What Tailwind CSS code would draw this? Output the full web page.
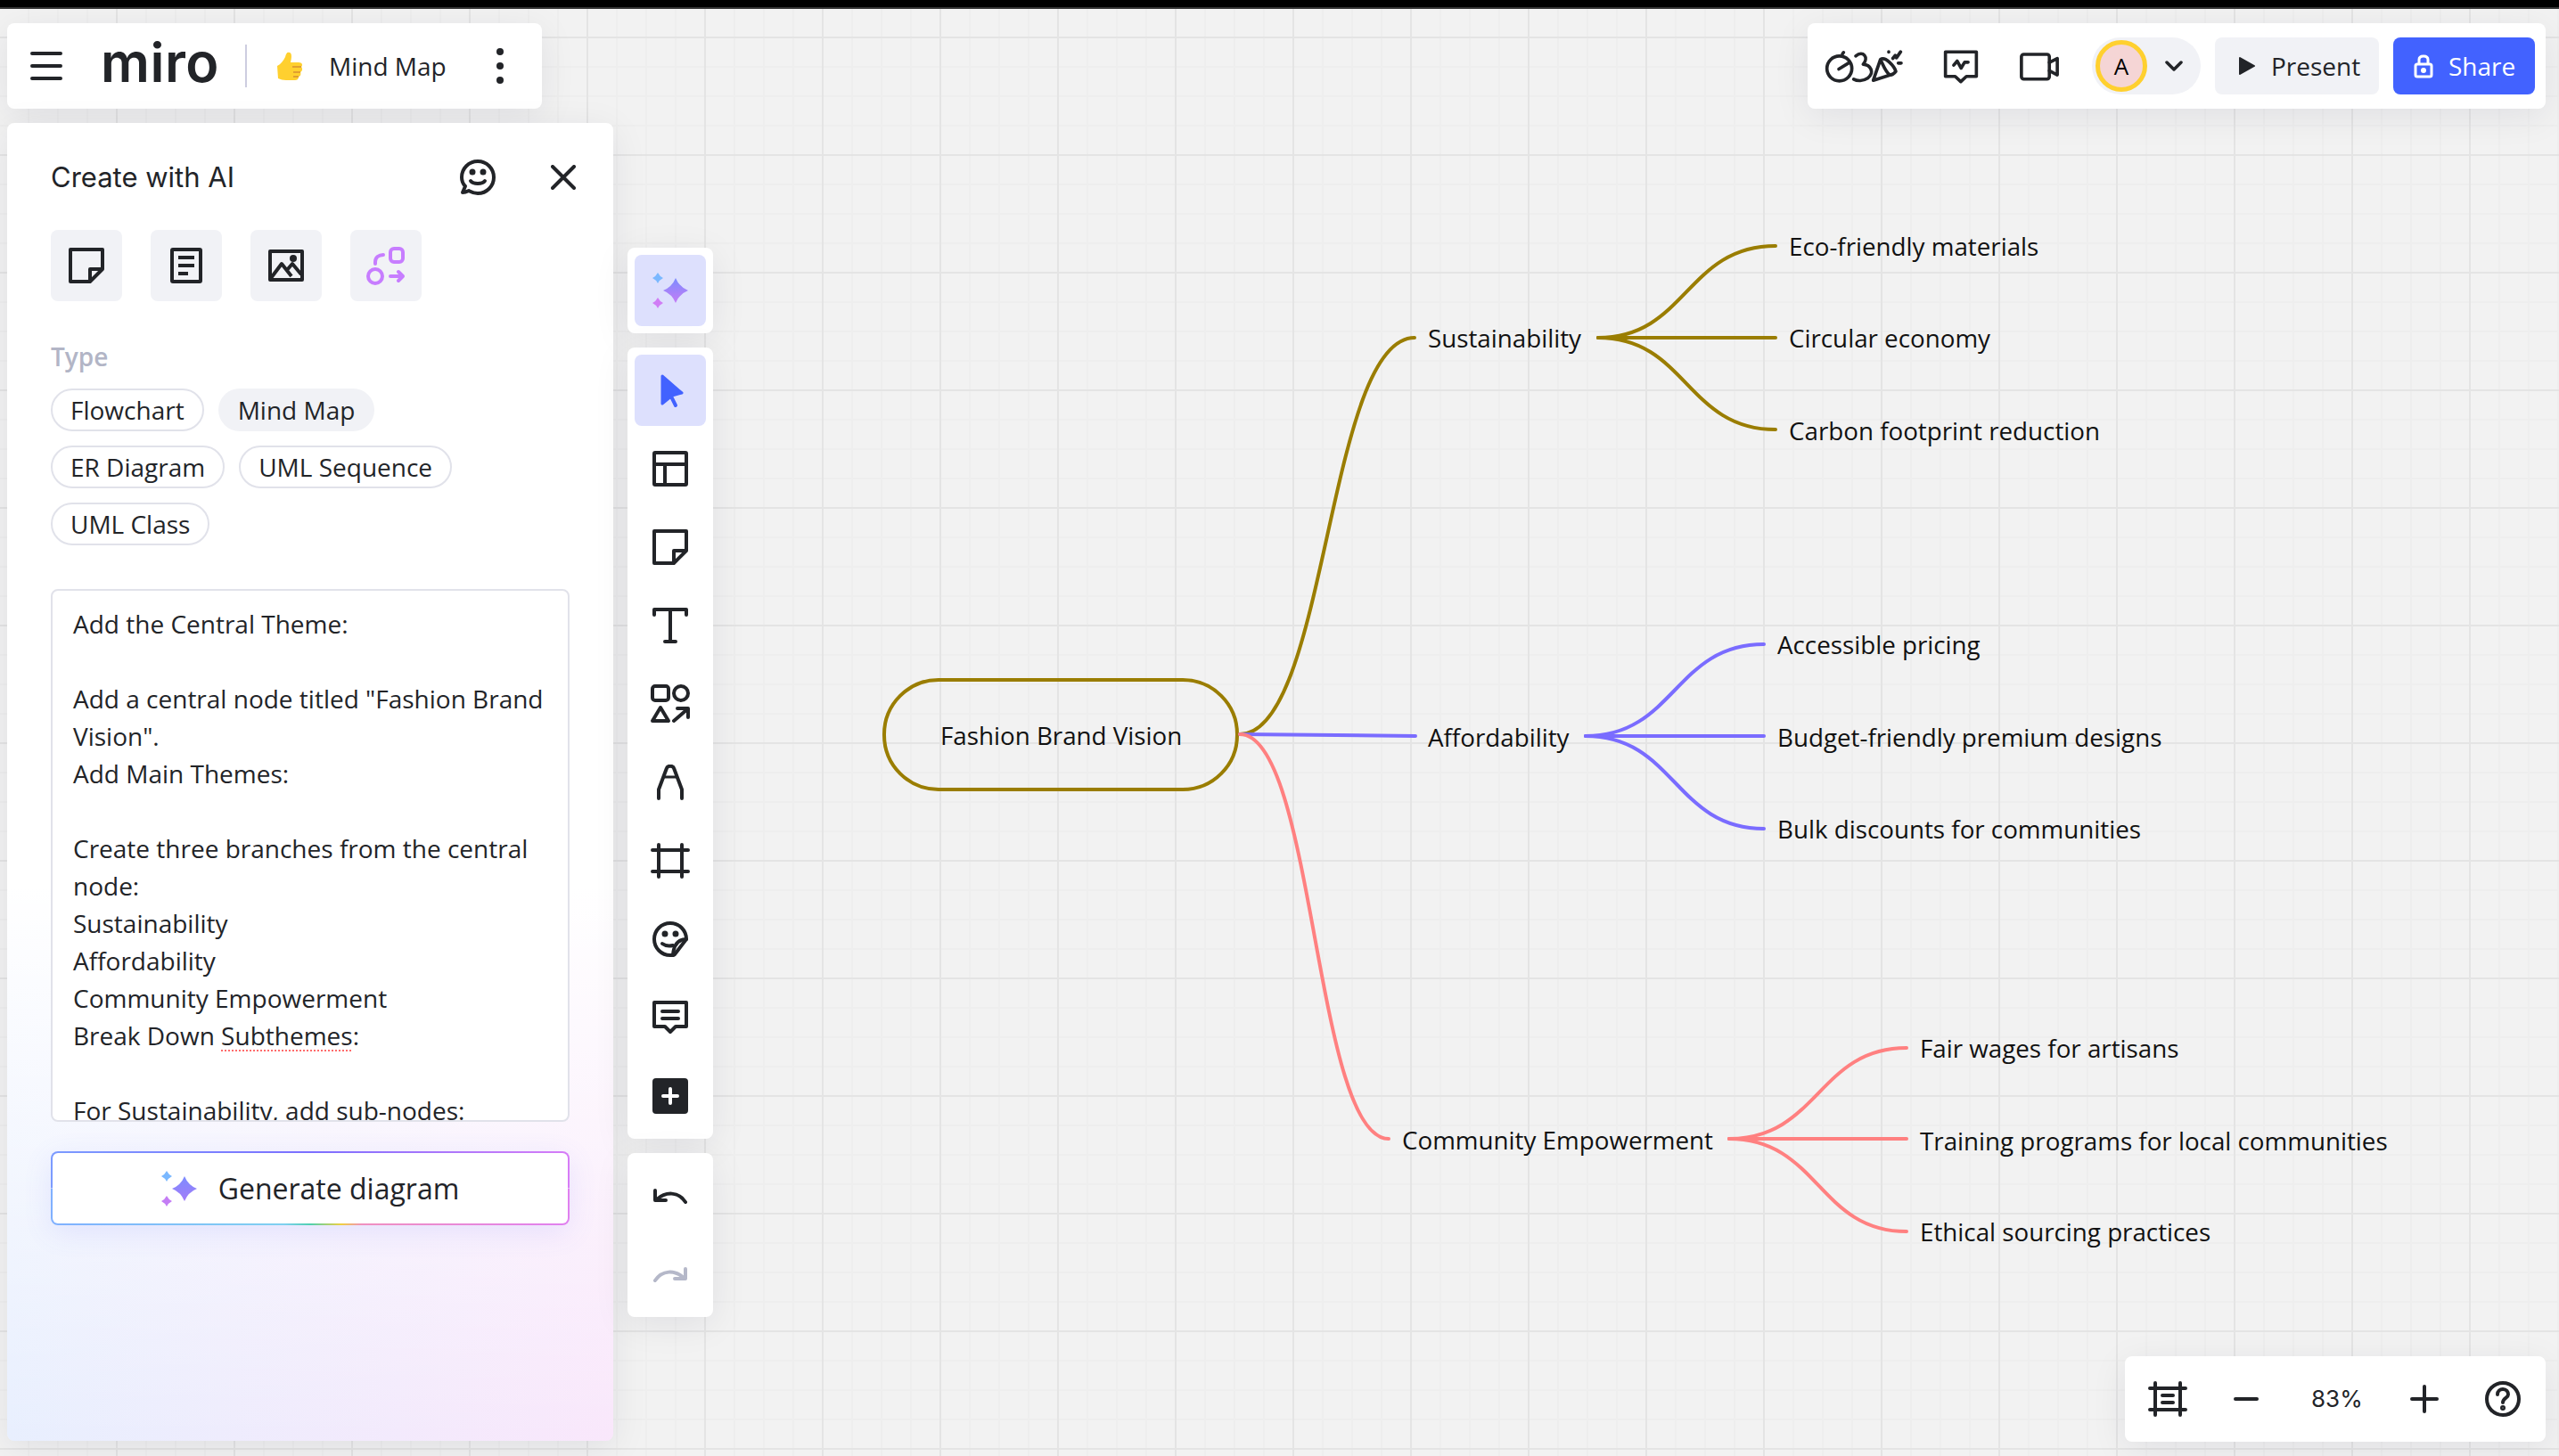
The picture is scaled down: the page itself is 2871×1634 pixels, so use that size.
<!DOCTYPE html>
<html lang="en">
<head>
  <meta charset="UTF-8" />
  <title>Miro - Mind Map</title>
  <script src="https://cdn.jsdelivr.net/npm/@tailwindcss/browser@4"></script>
</head>
<body class="bg-[#f2f2f2] font-['Open_Sans',sans-serif] text-[#222428]">
  <div class="relative w-[2871px] h-[1634px] overflow-hidden">

    <!-- top strip -->
    <div class="h-[10px] bg-black border-b-2 border-[#333333]"></div>

    <!-- canvas -->
    <div class="absolute inset-0 top-[10px] [background-image:linear-gradient(90deg,#e4e4e4_2px,transparent_2px),linear-gradient(#e4e4e4_2px,transparent_2px),linear-gradient(90deg,#eeeeee_2px,transparent_2px),linear-gradient(#eeeeee_2px,transparent_2px)] [background-size:132px_132px,132px_132px,33px_33px,33px_33px] [background-position:130px_31px,130px_31px,130px_31px,130px_31px]">
    </div>

    <!-- mind map lines -->
    <svg class="absolute left-0 top-0" width="2871" height="1634" fill="none" stroke-width="4" stroke-linecap="round">
      <rect x="992" y="763" width="396" height="123" rx="61" stroke="#9a7d00" />
      <g stroke="#9a7d00">
        <path d="M1391 824C1489 824 1489 379 1587 379" />
        <path d="M1793 379C1892 379 1892 276 1992 276" />
        <path d="M1793 379H1992" />
        <path d="M1793 379C1892 379 1892 482 1992 482" />
      </g>
      <g stroke="#7a6cff">
        <path d="M1391 824L1588 826" />
        <path d="M1779 826C1879 826 1879 723 1979 723" />
        <path d="M1779 826H1979" />
        <path d="M1779 826C1879 826 1879 930 1979 930" />
      </g>
      <g stroke="#ff8080">
        <path d="M1391 824C1475 824 1475 1278 1558 1278" />
        <path d="M1940 1278C2040 1278 2040 1176 2139 1176" />
        <path d="M1940 1278H2139" />
        <path d="M1940 1278C2040 1278 2040 1382 2139 1382" />
      </g>
    </svg>

    <!-- mind map nodes -->
    <div class="text-[27.75px] leading-[40px] text-[#111111] whitespace-nowrap">
      <div class="absolute left-[1055px] top-[825px] -translate-y-1/2">Fashion Brand Vision</div>
      <div class="absolute left-[1602px] top-[379px] -translate-y-1/2">Sustainability</div>
      <div class="absolute left-[1602px] top-[827px] -translate-y-1/2">Affordability</div>
      <div class="absolute left-[1573px] top-[1279px] -translate-y-1/2">Community Empowerment</div>
      <div class="absolute left-[2007px] top-[276px] -translate-y-1/2">Eco-friendly materials</div>
      <div class="absolute left-[2007px] top-[379px] -translate-y-1/2">Circular economy</div>
      <div class="absolute left-[2007px] top-[483px] -translate-y-1/2">Carbon footprint reduction</div>
      <div class="absolute left-[1994px] top-[723px] -translate-y-1/2">Accessible pricing</div>
      <div class="absolute left-[1994px] top-[827px] -translate-y-1/2">Budget-friendly premium designs</div>
      <div class="absolute left-[1994px] top-[930px] -translate-y-1/2">Bulk discounts for communities</div>
      <div class="absolute left-[2154px] top-[1176px] -translate-y-1/2">Fair wages for artisans</div>
      <div class="absolute left-[2154px] top-[1280px] -translate-y-1/2">Training programs for local communities</div>
      <div class="absolute left-[2154px] top-[1382px] -translate-y-1/2">Ethical sourcing practices</div>
    </div>

    <!-- top left bar -->
    <div class="absolute left-[8px] top-[26px] w-[600px] h-[96px] bg-white rounded-lg shadow-[0_8px_40px_rgba(5,0,56,0.08)] flex items-center pl-[26px]">
      <svg width="36" height="34" viewBox="0 0 36 34" fill="none" stroke="#222428" stroke-width="4" stroke-linecap="round"><path d="M2 3H34M2 17H34M2 31H34" /></svg>
      <div class="ml-[43px] w-[131px] font-['Inter',sans-serif] font-semibold text-[61px] leading-[60px] tracking-[0.5px] -mt-[8px]">miro</div>
      <div class="ml-[31px] w-[2px] h-[48px] bg-[#cdcde0]"></div>
      <svg class="ml-[32px]" width="32" height="33" viewBox="0 0 32 33">
        <path d="M2 16C6 14 9 10 11 6C12 2 13 0 16 1C19 2 18 8 17 12H26C30 12 31 15 29 17C31 19 30 22 28 23C29 25 28 28 26 28C26 31 24 32 22 32H12C8 32 6 31 3 30Z" fill="#ffd02f" />
        <path d="M19 17H29M20 23H28M20 28H26" stroke="#e0a030" stroke-width="2" fill="none" />
      </svg>
      <div class="ml-[28px] text-[28px] leading-[40px] whitespace-nowrap">Mind Map</div>
      <svg class="ml-[56px]" width="8" height="40" viewBox="0 0 8 40" fill="#222428"><circle cx="4" cy="4" r="4" /><circle cx="4" cy="20" r="4" /><circle cx="4" cy="36" r="4" /></svg>
    </div>

    <!-- create with AI panel -->
    <div class="absolute left-[8px] top-[138px] w-[680px] h-[1479px] rounded-lg px-[49px] pt-[40px] flex flex-col shadow-[0_8px_40px_rgba(5,0,56,0.08)] [background-image:linear-gradient(180deg,#ffffff_58%,rgba(255,255,255,0)_100%),linear-gradient(90deg,#e8effe,#f9e7fb)]">
      <div class="h-[42px] flex items-center">
        <div class="font-['Inter',sans-serif] text-[31px] leading-[42px] whitespace-nowrap">Create with AI</div>
        <svg class="ml-auto" width="40" height="40" viewBox="0 0 40 40" fill="none" stroke="#222428" stroke-width="4" stroke-linecap="round" stroke-linejoin="round">
          <path d="M3 37L6 30C3 27 2 23 2 20C2 10 10 2 20 2C30 2 38 10 38 20C38 30 30 38 20 38C15 38 12 36 10 35C8 36 6 37 3 37Z" />
          <path d="M12 24C15 28 25 28 28 24" />
          <circle cx="14" cy="14" r="1.5" fill="#222428" />
          <circle cx="26" cy="14" r="1.5" fill="#222428" />
        </svg>
        <svg class="ml-[62px] -mr-[7px]" width="28" height="28" viewBox="0 0 28 28" fill="none" stroke="#222428" stroke-width="4" stroke-linecap="round"><path d="M2 2L26 26M26 2L2 26" /></svg>
      </div>

      <div class="mt-[38px] flex gap-8">
        <div class="w-[80px] h-[80px] rounded-lg bg-[#f1f2f6] flex items-center justify-center">
          <svg width="40" height="40" viewBox="0 0 40 40" fill="none" stroke="#222428" stroke-width="4" stroke-linejoin="round"><path d="M2 2H38V24L24 38H2Z" /><path d="M24 38V24H38" /></svg>
        </div>
        <div class="w-[80px] h-[80px] rounded-lg bg-[#f1f2f6] flex items-center justify-center">
          <svg width="36" height="40" viewBox="0 0 36 40" fill="none" stroke="#222428" stroke-width="4" stroke-linejoin="round"><rect x="2" y="2" width="32" height="36" rx="1" /><path d="M9 11H27M9 20H27M9 29H20" /></svg>
        </div>
        <div class="w-[80px] h-[80px] rounded-lg bg-[#f1f2f6] flex items-center justify-center">
          <svg width="40" height="36" viewBox="0 0 40 36" fill="none" stroke="#222428" stroke-width="4" stroke-linejoin="round"><rect x="2" y="2" width="36" height="32" /><path d="M3 32L15 16L26 30M21 23L27 16L37 28" /><circle cx="28" cy="10" r="4" fill="#222428" stroke="none" /></svg>
        </div>
        <div class="w-[80px] h-[80px] rounded-lg bg-[#f1f2f6] flex items-center justify-center">
          <svg width="44" height="44" viewBox="0 0 44 44" fill="none" stroke="#c77dff" stroke-width="4" stroke-linecap="round" stroke-linejoin="round"><rect x="27" y="3" width="14" height="15" rx="4" /><path d="M10 20V18C10 13 14 10 19 10" /><circle cx="10" cy="34" r="8" /><path d="M27 34H41M36 29L41 34L36 39" /></svg>
        </div>
      </div>

      <div class="mt-[42px] h-[40px] text-[28px] leading-[40px] font-semibold text-[#b2b5c6]">Type</div>

      <div class="mt-[16px] flex flex-wrap gap-4 w-[500px] text-[28px] leading-[44px] whitespace-nowrap">
        <div class="h-[48px] px-[20px] rounded-full border-2 border-[#e1e2ea]">Flowchart</div>
        <div class="h-[48px] px-[22px] py-[2px] rounded-full bg-[#f1f2f6]">Mind Map</div>
        <div class="h-[48px] px-[20px] rounded-full border-2 border-[#e1e2ea]">ER Diagram</div>
        <div class="h-[48px] px-[20px] rounded-full border-2 border-[#e1e2ea]">UML Sequence</div>
        <div class="h-[48px] px-[20px] rounded-full border-2 border-[#e1e2ea]">UML Class</div>
      </div>

      <div class="mt-[49px] h-[598px] bg-white rounded-lg border-2 border-[#e1e2ea] pl-[23px] pt-[16px] overflow-hidden text-[28px] leading-[42px] whitespace-nowrap">
        Add the Central Theme:<br /><br />
        Add a central node titled "Fashion Brand<br />
        Vision".<br />
        Add Main Themes:<br /><br />
        Create three branches from the central<br />
        node:<br />
        Sustainability<br />
        Affordability<br />
        Community Empowerment<br />
        Break Down <span class="underline decoration-dotted decoration-[#ff6b6b] decoration-2 underline-offset-[5px]">Subthemes</span>:<br /><br />
        For Sustainability, add sub-nodes:
      </div>

      <div class="mt-[33px] h-[83px] rounded-lg p-[2px] bg-no-repeat shadow-[0_8px_32px_rgba(100,110,255,0.12)] [background-image:linear-gradient(90deg,#7b9bff,#7b6fff_50%,#d77cf7),linear-gradient(90deg,#7fb0ff,#7fd0f0_45%,#4fd0b0_50%,#f0d040_56%,#f090c0_60%,#e080f0)] [background-size:100%_50%,100%_50%] [background-position:top,bottom]">
        <div class="h-full bg-white rounded-[6px] flex items-center justify-center gap-6">
          <svg width="40" height="40" viewBox="0 0 40 40">
            <defs><linearGradient id="spark-a" x1="0" y1="0" x2="0" y2="1"><stop offset="0" stop-color="#7c8cff" /><stop offset="1" stop-color="#a47cf8" /></linearGradient></defs>
            <path d="M26 6Q30 16 40 20Q30 24 26 34Q22 24 12 20Q22 16 26 6Z" fill="url(#spark-a)" />
            <path d="M6 0Q8 4 12 6Q8 8 6 12Q4 8 0 6Q4 4 6 0Z" fill="#7ab8ff" />
            <path d="M6 28Q8 32 12 34Q8 36 6 40Q4 36 0 34Q4 32 6 28Z" fill="#c47df5" />
          </svg>
          <div class="text-[32px] leading-[44px] whitespace-nowrap">Generate diagram</div>
        </div>
      </div>
    </div>

    <!-- left toolbar -->
    <div class="absolute left-[704px] top-[278px] w-[96px] flex flex-col gap-4">
      <div class="bg-white rounded-lg p-2 shadow-[0_8px_40px_rgba(5,0,56,0.08)]">
        <div class="w-[80px] h-[80px] rounded-lg bg-[#dde0fd] flex items-center justify-center">
          <svg width="40" height="40" viewBox="0 0 40 40">
            <defs><linearGradient id="spark-b" x1="0" y1="0" x2="0" y2="1"><stop offset="0" stop-color="#7c8cff" /><stop offset="1" stop-color="#c57cf5" /></linearGradient></defs>
            <path d="M26 6Q30 16 40 20Q30 24 26 34Q22 24 12 20Q22 16 26 6Z" fill="url(#spark-b)" />
            <path d="M6 0Q8 4 12 6Q8 8 6 12Q4 8 0 6Q4 4 6 0Z" fill="#7ab8ff" />
            <path d="M6 28Q8 32 12 34Q8 36 6 40Q4 36 0 34Q4 32 6 28Z" fill="#d07df5" />
          </svg>
        </div>
      </div>

      <div class="bg-white rounded-lg p-2 flex flex-col gap-2 shadow-[0_8px_40px_rgba(5,0,56,0.08)]">
        <div class="w-[80px] h-[80px] rounded-lg bg-[#dde0fd] flex items-center justify-center">
          <svg width="40" height="40" viewBox="0 0 40 40" fill="#4262ff" stroke="#4262ff" stroke-linejoin="round" stroke-linecap="round"><path d="M11 4L33 23L22 26L11 35Z" stroke-width="3" /><path d="M21 27L26 37" stroke-width="4" fill="none" /></svg>
        </div>
        <div class="w-[80px] h-[80px] flex items-center justify-center">
          <svg width="40" height="40" viewBox="0 0 40 40" fill="none" stroke="#222428" stroke-width="4" stroke-linejoin="round"><rect x="2" y="2" width="36" height="36" rx="1" /><path d="M2 15H38M14 15V38" /></svg>
        </div>
        <div class="w-[80px] h-[80px] flex items-center justify-center">
          <svg width="40" height="40" viewBox="0 0 40 40" fill="none" stroke="#222428" stroke-width="4" stroke-linejoin="round"><path d="M2 2H38V24L24 38H2Z" /><path d="M24 38V24H38" /></svg>
        </div>
        <div class="w-[80px] h-[80px] flex items-center justify-center">
          <svg width="40" height="40" viewBox="0 0 40 40" fill="none" stroke="#222428" stroke-width="4" stroke-linecap="round" stroke-linejoin="round"><path d="M2 8V2H38V8M20 2V38M14 38H26" /></svg>
        </div>
        <div class="w-[80px] h-[80px] flex items-center justify-center">
          <svg width="44" height="44" viewBox="0 0 44 44" fill="none" stroke="#222428" stroke-width="4" stroke-linecap="round" stroke-linejoin="round"><rect x="2" y="2" width="18" height="16" rx="3" /><ellipse cx="34" cy="10" rx="8" ry="8" /><path d="M11 26L20 41H2Z" /><path d="M26 41L41 28M30 27H42V37" /></svg>
        </div>
        <div class="w-[80px] h-[80px] flex items-center justify-center">
          <svg width="30" height="40" viewBox="0 0 30 40" fill="none" stroke="#222428" stroke-width="4" stroke-linecap="round" stroke-linejoin="round"><path d="M2 38V28L11 4C12 1 18 1 19 4L28 28V38" /><path d="M9 14H21" stroke-width="3" /></svg>
        </div>
        <div class="w-[80px] h-[80px] flex items-center justify-center">
          <svg width="44" height="40" viewBox="0 0 44 40" fill="none" stroke="#222428" stroke-width="4" stroke-linecap="round"><path d="M2 8H42M2 32H42M9 2V38M35 2V38" /></svg>
        </div>
        <div class="w-[80px] h-[80px] flex items-center justify-center">
          <svg width="40" height="40" viewBox="0 0 40 40" fill="none" stroke="#222428" stroke-width="4" stroke-linecap="round" stroke-linejoin="round"><path d="M38 20C38 10 30 2 20 2C10 2 2 10 2 20C2 30 10 38 20 38C22 38 24 38 25 37L38 20Z" /><path d="M38 20C30 20 24 24 23 38" /><path d="M11 25C15 28 19 28 23 27" /><circle cx="14" cy="14" r="1.5" fill="#222428" /><circle cx="26" cy="14" r="1.5" fill="#222428" /></svg>
        </div>
        <div class="w-[80px] h-[80px] flex items-center justify-center">
          <svg width="40" height="38" viewBox="0 0 40 38" fill="none" stroke="#222428" stroke-width="4" stroke-linecap="round" stroke-linejoin="round"><path d="M2 2H38V29H26L20 35L14 29H2Z" /><path d="M11 12H29M11 20H29" /></svg>
        </div>
        <div class="w-[80px] h-[80px] flex items-center justify-center">
          <svg width="40" height="40" viewBox="0 0 40 40"><rect width="40" height="40" rx="4" fill="#222428" /><path d="M12 20H28M20 12V28" stroke="#ffffff" stroke-width="4" stroke-linecap="round" /></svg>
        </div>
      </div>

      <div class="bg-white rounded-lg p-2 flex flex-col gap-2 shadow-[0_8px_40px_rgba(5,0,56,0.08)]">
        <div class="w-[80px] h-[80px] flex items-center justify-center">
          <svg width="38" height="18" viewBox="0 0 38 18" fill="none" stroke="#222428" stroke-width="4" stroke-linecap="round" stroke-linejoin="round"><path d="M36 16C28 4 14 4 4 13" /><path d="M2 3V14H14" /></svg>
        </div>
        <div class="w-[80px] h-[80px] flex items-center justify-center">
          <svg width="38" height="18" viewBox="0 0 38 18" fill="none" stroke="#b5b8c9" stroke-width="4" stroke-linecap="round" stroke-linejoin="round"><path d="M2 16C10 4 24 4 34 13" /><path d="M36 3V14H24" /></svg>
        </div>
      </div>
    </div>

    <!-- top right bar -->
    <div class="absolute left-[2028px] top-[26px] w-[828px] h-[96px] bg-white rounded-lg shadow-[0_8px_40px_rgba(5,0,56,0.08)] flex items-center pl-[19px]">
      <svg width="90" height="37" viewBox="20 30 270 110" fill="none" stroke="#222428" stroke-width="11" stroke-linecap="round" stroke-linejoin="round">
        <circle cx="70" cy="92" r="42" /><path d="M68 94L104 72M80 44L84 38" />
        <path d="M125 50C150 30 170 55 150 78C175 80 190 105 165 125C150 135 130 135 118 128" />
        <path d="M184 132L240 114M184 132L208 62C225 50 255 85 260 102C250 115 240 114 240 114C225 105 215 75 208 62" />
        <path d="M250 58L258 48L262 56L276 36M268 74H278M236 36V37" />
      </svg>
      <svg class="ml-[42px]" width="42" height="39" viewBox="415 35 125 118" fill="none" stroke="#222428" stroke-width="11" stroke-linecap="round" stroke-linejoin="round">
        <path d="M425 45H530V128H496L477 146L458 128H425Z" /><path d="M453 90L465 76L478 100L490 80H502" />
      </svg>
      <svg class="ml-[44px]" width="46" height="33" viewBox="672 35 138 100" fill="none" stroke="#222428" stroke-width="11" stroke-linecap="round" stroke-linejoin="round">
        <rect x="680" y="44" width="95" height="84" rx="8" /><path d="M775 72L802 58V114L775 100" />
      </svg>
      <div class="ml-[36px] w-[122px] h-[64px] rounded-full bg-[#f1f2f6] flex items-center pl-[4px]">
        <div class="w-[58px] h-[58px] rounded-full border-[5px] border-[#ffd02f] bg-[#f5d5d5] flex items-center justify-center text-[26px] font-medium text-black">A</div>
        <svg class="ml-[20px]" width="20" height="12" viewBox="0 0 20 12" fill="none" stroke="#222428" stroke-width="3.5" stroke-linecap="round" stroke-linejoin="round"><path d="M2 2L10 10L18 2" /></svg>
      </div>
      <div class="ml-4 w-[184px] h-[64px] rounded-lg bg-[#f1f2f6] flex items-center pl-[27px]">
        <svg width="18" height="20" viewBox="0 0 18 20" fill="#222428"><path d="M1 1L17 10L1 19Z" stroke="#222428" stroke-width="2" stroke-linejoin="round" /></svg>
        <div class="ml-[18px] text-[28px] leading-[40px]">Present</div>
      </div>
      <div class="ml-4 w-[159px] h-[64px] rounded-lg bg-[#4262ff] flex items-center pl-[23px] text-white">
        <svg width="22" height="27" viewBox="0 0 22 27" fill="none" stroke="#ffffff" stroke-width="3" stroke-linejoin="round"><rect x="2" y="11" width="18" height="14" rx="2" /><path d="M6 11V6C6 3 8 2 11 2C14 2 16 3 16 6V11" /><circle cx="11" cy="18" r="1.5" fill="#ffffff" /></svg>
        <div class="ml-[17px] text-[28px] leading-[40px]">Share</div>
      </div>
    </div>

    <!-- bottom right bar -->
    <div class="absolute left-[2384px] top-[1522px] w-[472px] h-[96px] bg-white rounded-lg shadow-[0_8px_40px_rgba(5,0,56,0.08)] flex items-center pl-[26px]">
      <svg width="44" height="40" viewBox="0 0 44 40" fill="none" stroke="#222428" stroke-width="4" stroke-linecap="round"><path d="M2 8H42M2 32H42M8 2V38M36 2V38M16 16H28M16 24H28" /></svg>
      <svg class="ml-[52px]" width="28" height="4" viewBox="0 0 28 4" fill="none" stroke="#222428" stroke-width="4" stroke-linecap="round"><path d="M2 2H26" /></svg>
      <div class="ml-[59px] w-[54px] font-['Inter',sans-serif] text-[26px] leading-[36px] whitespace-nowrap">83%</div>
      <svg class="ml-[57px]" width="32" height="32" viewBox="0 0 32 32" fill="none" stroke="#222428" stroke-width="4" stroke-linecap="round"><path d="M2 16H30M16 2V30" /></svg>
      <svg class="ml-[52px]" width="40" height="40" viewBox="0 0 40 40" fill="none" stroke="#222428" stroke-width="4" stroke-linecap="round"><circle cx="20" cy="20" r="18" /><path d="M14 15C14 11 17 9 20 9C24 9 26 12 26 15C26 19 20 19 20 24" /><circle cx="20" cy="30" r="1" fill="#222428" /></svg>
    </div>
  </div>
</body>
</html>
